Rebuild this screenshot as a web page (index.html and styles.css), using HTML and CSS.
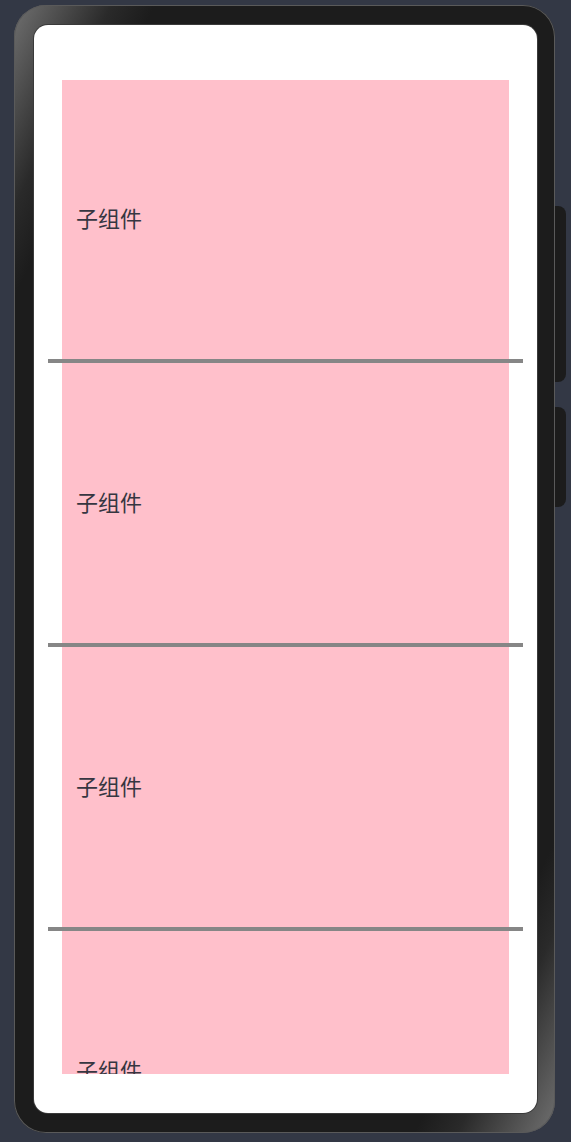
FILE: index.html
```html
<!DOCTYPE html>
<html lang="zh">
<head>
<meta charset="utf-8">
<title>List</title>
<link rel="stylesheet" href="styles.css">
</head>
<body>
<div class="stage">
  <div class="phone">
    <div class="btn btn-power"></div>
    <div class="btn btn-volume"></div>
    <div class="screen">
      <div class="viewport">
        <div class="list">
          <div class="item">子组件</div>
          <div class="divider"></div>
          <div class="item">子组件</div>
          <div class="divider"></div>
          <div class="item">子组件</div>
          <div class="divider"></div>
          <div class="item">子组件</div>
        </div>
      </div>
    </div>
  </div>
</div>
</body>
</html>
```

FILE: styles.css
```css
html, body {
  margin: 0;
  padding: 0;
  background: #333845;
}
body {
  width: 571px;
  height: 1142px;
  overflow: hidden;
  font-family: "Noto Sans CJK SC", "Noto Sans", sans-serif;
}
.stage {
  padding: 5px 0 0 14px;
}
.phone {
  position: relative;
  box-sizing: border-box;
  width: 541px;
  height: 1128px;
  padding: 20px 18px 20px 20px;
  border-radius: 32px;
  background: linear-gradient(to bottom right, #707070 0%, #2a2a2a 9%, #1c1c1c 13%, #1c1c1c 87%, #2a2a2a 91%, #707070 100%);
  box-shadow: inset 0 0 0 1px #5a5a5a;
}
.btn {
  position: absolute;
  left: 541px;
  width: 11px;
  background: #1c1c1c;
  border-radius: 0 8px 8px 0;
}
.btn-power {
  top: 201px;
  height: 176px;
}
.btn-volume {
  top: 402px;
  height: 100px;
}
.screen {
  box-sizing: border-box;
  height: 100%;
  background: #fff;
  border-radius: 14px;
  padding: 55px 14px 39px 14px;
  box-shadow: 0 0 0 1px #3a3a3a;
}
.viewport {
  height: 100%;
  overflow: hidden;
}
.list {
  margin-top: -1px;
  display: flex;
  flex-direction: column;
}
.item {
  box-sizing: border-box;
  height: 280px;
  margin: 0 14px;
  background: #ffc0cb;
  display: flex;
  align-items: center;
  padding: 0 0 5px 14px;
  font-size: 22px;
  line-height: 1;
  color: #363641;
  flex-shrink: 0;
}
.divider {
  height: 4px;
  background: #868686;
  flex-shrink: 0;
}
```
